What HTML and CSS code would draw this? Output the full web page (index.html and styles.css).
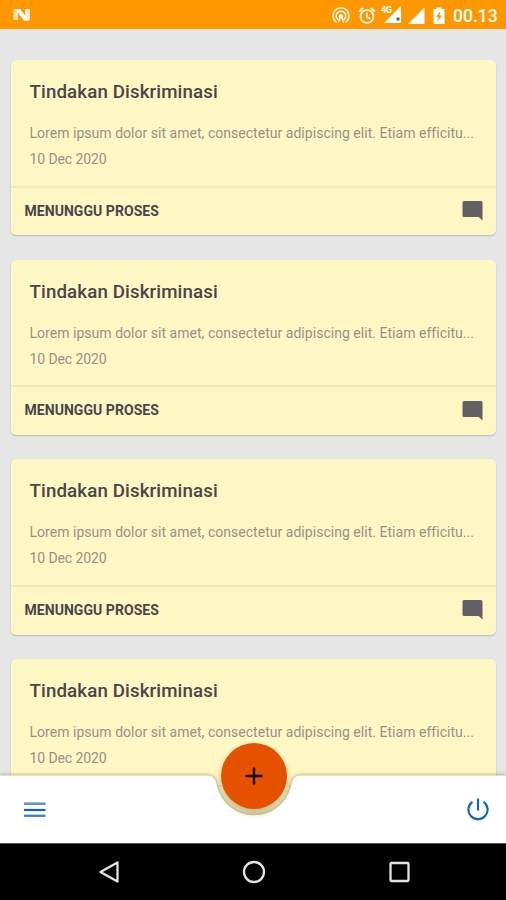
FILE: index.html
```html
<!DOCTYPE html>
<html lang="id">
<head>
<meta charset="utf-8">
<title>Tindakan Diskriminasi</title>
<link rel="stylesheet" href="styles.css">
</head>
<body>
<div class="phone">
  <header class="status">
    <svg class="logo" width="20" height="14" viewBox="0 0 20 14"><path d="M1.5 12V2.5Q1.5 1 3 1H6V12Z" fill="#ffe0b0"/><path d="M13 1H18V10.500Q18 12.500 16 12.500H13Z" fill="#ffedd0"/><path d="M3 1H8L17 12.500H12Z" fill="#fff"/></svg>
    <div class="indicators">
      <svg width="18" height="18" viewBox="0 0 18 18" fill="none" stroke="#fff" stroke-width="1.500" stroke-linecap="round"><path d="M4 15A8 8 0 1 1 14 15M6 12.700A4.800 4.800 0 1 1 12 12.700"/><circle cx="9" cy="9.500" r="1.500" fill="#fff"/><path d="M8.500 10L6.500 15.500M9.500 10L11.500 15.500" stroke-width="1"/></svg>
      <svg width="18" height="18" viewBox="0 0 18 18" fill="none" stroke="#fff" stroke-width="1.700"><circle cx="9" cy="9.500" r="6.500"/><path d="M1 4.500L5 1M17 4.500L13 1M9 5.500V10L12 11.800"/></svg>
      <div class="mobile"><span class="net">4G</span><svg width="20" height="18" viewBox="0 0 20 18"><path d="M19 0V17H2Z" fill="#fff"/><path d="M14.500 11.500h3v3h-3z" fill="#5d5b70"/></svg></div>
      <svg width="18" height="18" viewBox="0 0 18 18"><path d="M17.500 0.500V17H1Z" fill="#fff"/></svg>
      <svg class="battery" width="12" height="18" viewBox="0 0 12 18"><path d="M3.500 0.500h5V2H11.500V17H.5V2H3.500Z" fill="#fff"/><path d="M7.500 4L3 10H5.500L4.500 14.500L9 8.500H6.500Z" fill="#ff9800"/></svg>
      <span class="clock">00.13</span>
    </div>
  </header>

  <main class="list">
    <article class="card">
      <div class="content"><h2>Tindakan Diskriminasi</h2><p class="excerpt">Lorem ipsum dolor sit amet, consectetur adipiscing elit. Etiam efficitu...</p><p class="date">10 Dec 2020</p></div>
      <footer class="state"><span>MENUNGGU PROSES</span><svg width="21" height="20" viewBox="0 0 21 20"><path d="M2 0H19Q20.500 0 20.500 1.500V19.500L16.700 16H2Q.5 16 .5 14.500V1.500Q.5 0 2 0Z"/></svg></footer>
    </article>
    <article class="card">
      <div class="content"><h2>Tindakan Diskriminasi</h2><p class="excerpt">Lorem ipsum dolor sit amet, consectetur adipiscing elit. Etiam efficitu...</p><p class="date">10 Dec 2020</p></div>
      <footer class="state"><span>MENUNGGU PROSES</span><svg width="21" height="20" viewBox="0 0 21 20"><path d="M2 0H19Q20.500 0 20.500 1.500V19.500L16.700 16H2Q.5 16 .5 14.500V1.500Q.5 0 2 0Z"/></svg></footer>
    </article>
    <article class="card">
      <div class="content"><h2>Tindakan Diskriminasi</h2><p class="excerpt">Lorem ipsum dolor sit amet, consectetur adipiscing elit. Etiam efficitu...</p><p class="date">10 Dec 2020</p></div>
      <footer class="state"><span>MENUNGGU PROSES</span><svg width="21" height="20" viewBox="0 0 21 20"><path d="M2 0H19Q20.500 0 20.500 1.500V19.500L16.700 16H2Q.5 16 .5 14.500V1.500Q.5 0 2 0Z"/></svg></footer>
    </article>
    <article class="card">
      <div class="content"><h2>Tindakan Diskriminasi</h2><p class="excerpt">Lorem ipsum dolor sit amet, consectetur adipiscing elit. Etiam efficitu...</p><p class="date">10 Dec 2020</p></div>
    </article>
  </main>

  <nav class="appbar">
    <svg class="appbar-shape" width="506" height="68" viewBox="0 0 506 68"><path d="M0 .5H207C214 .5 215.500 5 217 11A38 38 0 0 0 291 11C292.500 5 294 .5 301 .5H506V68H0Z" fill="#fff"/></svg>
    <svg class="menu" width="22" height="16" viewBox="0 0 22 16"><path d="M0 1.700H21.500" stroke="#658fd0" stroke-width="2.600"/><path d="M0 8H21.500" stroke="#1762b8" stroke-width="2.200"/><path d="M0 13.800H21.500" stroke="#3a80cc" stroke-width="2.300"/></svg>
    <svg class="power" width="22" height="23" viewBox="0 0 22 23" fill="none" stroke="#1565c0" stroke-width="2.200"><path d="M11 .5V12.500M5.400 3.900A9.600 9.600 0 1 0 16.600 3.900"/></svg>
    <button class="fab" aria-label="+"><svg width="18" height="18" viewBox="0 0 18 18"><path d="M9 .5V17.500M.5 9H17.500" stroke="#111" stroke-width="2.300"/></svg></button>
  </nav>

  <div class="system">
    <svg width="24" height="24" viewBox="0 0 24 24"><path d="M20.500 2.500V21.500L3.500 12Z" stroke-linejoin="round"/></svg>
    <svg width="24" height="24" viewBox="0 0 24 24"><circle cx="12" cy="12" r="10"/></svg>
    <svg width="24" height="24" viewBox="0 0 24 24"><rect x="3.500" y="3" width="18" height="18" rx="1"/></svg>
  </div>
</div>
</body>
</html>
```

FILE: styles.css
```css
* { box-sizing: border-box; }
body { margin: 0; font-family: Roboto, sans-serif; }
h2, p { margin: 0; }
svg { display: block; flex: none; }

.phone {
  position: relative;
  display: flex;
  flex-direction: column;
  width: 506px;
  height: 900px;
  overflow: hidden;
  background: #e6e6e6;
}

.status {
  display: flex;
  flex: none;
  justify-content: space-between;
  height: 28.500px;
  padding: 7px 9px 0 12px;
  background: #ff9800;
}
.logo { margin-top: 1px; }
.indicators { display: flex; height: 18px; }
.indicators > svg + svg { margin-left: 8px; }
.mobile { position: relative; margin: -1px 5px 0 6px; }
.net { position: absolute; left: -1px; top: 0; color: #fff; font-size: 9px; font-weight: 700; line-height: 9px; letter-spacing: -.5px; }
.clock { width: 44px; margin-left: 8px; color: #fff; font-size: 17.500px; font-weight: 500; line-height: 18px; white-space: nowrap; }

.list { display: flex; flex: 1; flex-direction: column; gap: 24.400px; padding: 31.500px 10px 0 11px; overflow: hidden; }
.card { flex: none; height: 175.300px; border-radius: 5px; background: #fdf7c4; box-shadow: 0 1px 2px rgba(0, 0, 0, .22); white-space: nowrap; }
.content { height: 127.500px; padding: 20px 18px 0 18.500px; border-bottom: 2px solid #f1e9b7; color: #96928a; }
.content h2 { color: #48464a; font-size: 18.700px; font-weight: 500; line-height: 24px; letter-spacing: .13px; }
.excerpt { margin-top: 19px; font-size: 14px; line-height: 20px; letter-spacing: .03px; }
.date { margin-top: 6px; font-size: 14px; line-height: 20px; letter-spacing: -.1px; }
.state { display: flex; justify-content: space-between; padding: 13px 13.500px 0; color: #48464a; font-size: 14px; font-weight: 700; line-height: 20px; letter-spacing: .05px; }
.state svg { margin-top: .5px; fill: #626064; }

.appbar { position: absolute; left: 0; top: 775px; display: flex; justify-content: space-between; width: 506px; height: 68px; padding: 23px 17px 0 23.500px; }
.appbar-shape { position: absolute; inset: 0; overflow: visible; filter: drop-shadow(0 0 2px rgba(100, 90, 20, .65)); }
.menu { position: relative; margin-top: 4px; }
.power { position: relative; }
.fab { position: absolute; left: 221px; top: -32px; display: grid; place-items: center; width: 66px; height: 66px; padding: 0; border: 0; border-radius: 50%; background: #e65100; box-shadow: 0 4px 6px rgba(0, 0, 0, .25); }

.system { position: relative; display: flex; flex: none; align-items: center; justify-content: space-between; height: 57px; padding: 0 95px 0 97px; border-top: 1px solid #555; background: #000; }
.system svg { fill: none; stroke: #e4e4e4; stroke-width: 2.300px; }
```
